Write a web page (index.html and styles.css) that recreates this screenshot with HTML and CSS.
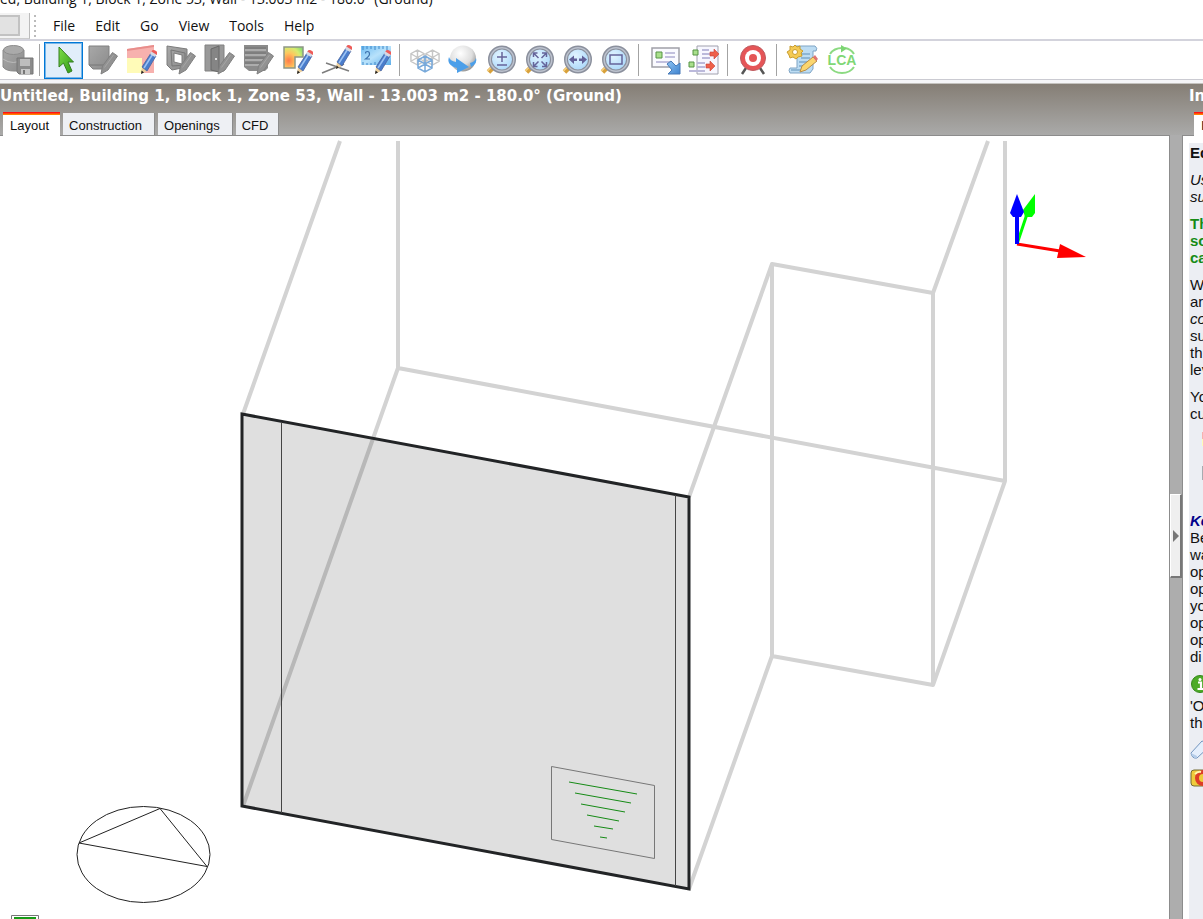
FILE: index.html
```html
<!DOCTYPE html>
<html lang="en">
<head>
<meta charset="utf-8">
<title>Untitled, Building 1, Block 1, Zone 53, Wall</title>
<link rel="stylesheet" href="styles.css">
</head>
<body>
<svg class="defs" aria-hidden="true">
  <defs>
    <linearGradient id="gGrey" x1="0" y1="0" x2="1" y2="1"><stop offset="0" stop-color="#a8a8a8"/><stop offset="1" stop-color="#8b8b8b"/></linearGradient>
    <linearGradient id="gGreen" x1="0" y1="0" x2="1" y2="1"><stop offset="0" stop-color="#7ede4a"/><stop offset="1" stop-color="#2f9a14"/></linearGradient>
    <radialGradient id="gHeat" cx=".25" cy=".65" r=".9"><stop offset="0" stop-color="#ff7a4a"/><stop offset=".4" stop-color="#ffc65e"/><stop offset=".7" stop-color="#d8ec70"/><stop offset="1" stop-color="#86dc70"/></radialGradient>
    <radialGradient id="gLens" cx=".4" cy=".35" r=".7"><stop offset="0" stop-color="#e2f4ff"/><stop offset="1" stop-color="#a5d5fa"/></radialGradient>
    <radialGradient id="gBall" cx=".4" cy=".3" r=".75"><stop offset="0" stop-color="#ffffff"/><stop offset=".6" stop-color="#dedede"/><stop offset="1" stop-color="#8c8c8c"/></radialGradient>
    <linearGradient id="gBlue" x1="0" y1="0" x2="1" y2="1"><stop offset="0" stop-color="#8fc4f3"/><stop offset="1" stop-color="#3f83cf"/></linearGradient>
    <linearGradient id="gRuler" x1="0" y1="0" x2="1" y2="1"><stop offset="0" stop-color="#6fbcf2"/><stop offset=".5" stop-color="#b8e2fb"/><stop offset="1" stop-color="#5eaeea"/></linearGradient>
    <symbol id="pencil" viewBox="0 0 30 30">
      <path d="M14 29l1-7 5 4z" fill="#eccf9c"/><path d="M14 29l.6-3.500 2.400 2z" fill="#222"/>
      <path d="M15 22L24 8l5 3-9 15z" fill="#4a7dcc" stroke="#4a64a0" stroke-width=".8"/>
      <path d="M17 23L25.500 9.500" stroke="#9cc3f4" stroke-width="1.500"/>
      <path d="M23 9l1.500-3 5.500 3-2 3z" fill="#d5d9e4"/><path d="M24.300 6.500Q26 4 29 6t1 4z" fill="#ee5b58"/>
    </symbol>
    <symbol id="pencilGrey" viewBox="0 0 30 30"><path d="M13 29l1.500-8L24.500 7.500 29.500 11 20 25z" fill="#929292" stroke="#808080"/><path d="M16.500 22.500L25.500 10" stroke="#a6a6a6"/></symbol>
    <symbol id="lens" viewBox="0 0 30 30">
      <path d="M2.500 27l5-5" stroke="#d8a13b" stroke-width="5"/><path d="M1.500 26l5-5" stroke="#f5d180" stroke-width="1.500"/>
      <circle cx="16" cy="14.500" r="12" fill="url(#gLens)" stroke="#8b909d" stroke-width="4"/>
      <circle cx="16" cy="14.500" r="11.800" fill="none" stroke="#bcc2ce" stroke-width="1.500"/>
    </symbol>
    <symbol id="cube" viewBox="0 0 16 18"><path d="M8 1l7 4v8l-7 4-7-4V5zM1 5l7 4 7-4M8 9v8M8 1v8M1 13l7-4 7 4" fill="none" stroke="currentColor" stroke-width="1.500"/></symbol>
  </defs>
</svg>

<div class="window-title">ed, Building 1, Block 1, Zone 53, Wall - 13.003 m2 - 180.0° (Ground)</div>

<nav class="menubar">
  <div class="menu-stub"><span></span></div>
  <i class="grip"></i>
  <button>File</button><button>Edit</button><button>Go</button><button>View</button><button>Tools</button><button>Help</button>
</nav>

<div class="toolbar">
  <button class="tool save" aria-label="Save"><svg viewBox="0 0 30 30"><path d="M0 5v17q3 4 11 4h10V5z" fill="url(#gGrey)" stroke="#888"/><ellipse cx="10.500" cy="5" rx="10" ry="4.500" fill="#aaa" stroke="#8d8d8d"/><path d="M0 14q10 7 21 0" fill="none" stroke="#bbb"/><path d="M14 13h16v16H16l-2-2z" fill="#8b8b8b" stroke="#777"/><path d="M17 14h10v7H17z" fill="#bebebe"/><path d="M18 24h9v5h-9z" fill="#c9c9c9"/><path d="M20 25h2v4h-2z" fill="#777"/></svg></button>
  <i class="sep"></i>
  <div class="group wide">
    <button class="tool selected" aria-label="Select"><svg viewBox="0 0 30 30"><path d="M10 2v20l4.500-4 4.500 10 4-2-4-9h5.500z" fill="url(#gGreen)" stroke="#357e20"/></svg></button>
    <button class="tool" aria-label="Edit surface"><svg viewBox="0 0 30 30"><path d="M1 1h20v20l-3 3H5l-4-4z" fill="url(#gGrey)" stroke="#808080"/><path d="M1 20h17l3-3" fill="none" stroke="#777"/><use href="#pencilGrey"/></svg></button>
    <button class="tool" aria-label="Edit notes"><svg viewBox="0 0 30 30"><path d="M0 4l27-4v28H0z" fill="#f7b1ae"/><path d="M0 4l27-4v2L0 6z" fill="#e88d8b"/><path d="M0 13h15v15H0z" fill="#fffbb8"/><use href="#pencil"/></svg></button>
    <button class="tool" aria-label="Draw window"><svg viewBox="0 0 30 30"><path fill-rule="evenodd" d="M1 1l20 3v18L6 25l-5-5zM8 8v9l8 2v-9z" fill="url(#gGrey)" stroke="#7c7c7c"/><path d="M5 5l14 3v12L6 21z" fill="none" stroke="#777"/><use href="#pencilGrey"/></svg></button>
    <button class="tool" aria-label="Draw door"><svg viewBox="0 0 30 30"><path d="M0 0h19v26H0z" fill="#999" stroke="#818181"/><path d="M6 4l8-3v26l-8-2z" fill="#858585" stroke="#696969"/><path d="M10 14h2" stroke="#ddd" stroke-width="2"/><use href="#pencilGrey"/></svg></button>
    <button class="tool" aria-label="Draw vent"><svg viewBox="0 0 30 30"><path d="M0 0h24v23l-3 3H5l-5-4z" fill="#8b8b8b"/><path d="M1 5h21M1 10h21M1 15h20M1 20h18" stroke="#b8b8b8" stroke-width="1.500"/><path d="M1 3h21M1 8h21M1 13h20M1 18h18" stroke="#727272"/><use href="#pencilGrey"/></svg></button>
    <button class="tool" aria-label="Edit zone"><svg viewBox="0 0 30 30"><path d="M1 2h19v10h-8v11H1z" fill="url(#gHeat)" stroke="#8e9686" stroke-width="1.500"/><use href="#pencil"/></svg></button>
    <button class="tool" aria-label="Draw line"><svg viewBox="0 0 30 30"><path d="M0 28L22 19M4 18l23 8" stroke="#7d7d7d" stroke-width="1.500"/><g transform="translate(0 -5)"><use href="#pencil" width="30" height="30"/></g></svg></button>
    <button class="tool" aria-label="Measure"><svg viewBox="0 0 30 30"><path d="M0 1h30v19H0z" fill="url(#gRuler)"/><path d="M2 1v4M6 1v3M10 1v3M14 1v4M18 1v3M22 1v3M26 1v4M2 20v-3M6 20v-2M10 20v-2M14 20v-3" stroke="#3f87c8"/><path d="M4.500 8.500Q4.500 6.500 6.500 6.500T8.500 9Q8.500 11 4.500 14H9" fill="none" stroke="#3d72ad" stroke-width="1.200"/><use href="#pencil"/></svg></button>
  </div>
  <i class="sep"></i>
  <div class="group views">
    <button class="tool" aria-label="Axonometric view"><svg viewBox="0 0 30 30"><g color="#c6c6c6"><use href="#cube" x="0" y="4" width="15" height="17"/><use href="#cube" x="15" y="4" width="15" height="17"/></g><g color="#78a9da"><use href="#cube" x="7" y="10" width="16" height="18"/></g></svg></button>
    <button class="tool" aria-label="Orbit"><svg viewBox="0 0 30 30"><circle cx="15" cy="13.500" r="13" fill="url(#gBall)"/><path d="M1 12q1 4 7 5v-4l13 9-12 6v-5Q-2 20 1 12zM22 18q5-1 6-5 2 5-5 9z" fill="#4c9fe9"/></svg></button>
    <button class="tool" aria-label="Zoom"><svg viewBox="0 0 30 30"><use href="#lens"/><path d="M11 12h10M16 7v10M11 20h10" stroke="#65649a" stroke-width="1.500"/></svg></button>
    <button class="tool" aria-label="Fit view"><svg viewBox="0 0 30 30"><use href="#lens"/><path d="M9.500 12V8h4m-4 0l5 5M18 8h4.500v4m0-4l-5 5M9.500 17v4.500h4m-4 0l5-5M18 21.500h4.500V17m0 4.500l-5-5" fill="none" stroke="#65649a" stroke-width="1.500"/></svg></button>
    <button class="tool" aria-label="Pan"><svg viewBox="0 0 30 30"><use href="#lens"/><path d="M7 14.500l5-4v3h3v2.500h-3v3zM25 14.500l-5-4v3h-3v2.500h3v3z" fill="#626199"/></svg></button>
    <button class="tool" aria-label="Zoom window"><svg viewBox="0 0 30 30"><use href="#lens"/><path d="M10 10h12v9H10z" fill="none" stroke="#65649a" stroke-width="1.500"/></svg></button>
  </div>
  <i class="sep"></i>
  <div class="group transfer">
    <button class="tool" aria-label="Load data"><svg viewBox="0 0 30 30"><path d="M1 3h27v19H1z" fill="#fafaff" stroke="#a0a0a8" stroke-width="1.500"/><path d="M5 7h6v6H5z" fill="#a9df8c" stroke="#569447"/><path d="M14 8h10M14 12h10M5 17h16" stroke="#c2c0de" stroke-width="2"/><path d="M16 19l4-3 5 5 4-3v11H17l4-4z" fill="url(#gBlue)" stroke="#4679b7"/></svg></button>
    <button class="tool" aria-label="Copy data"><svg viewBox="0 0 30 30"><path d="M8 1h21v28H8z" fill="#f7f7ff" stroke="#a1a1ae"/><path d="M4 5h5v5H4zM0 17h5v5H0z" fill="#a9df8c" stroke="#569447"/><path d="M13 5h7M13 9h9M13 13h8M8 18h8M8 22h8M0 26h16" stroke="#bbb9db" stroke-width="2"/><path d="M21 7h4V4l5 5-5 5v-3h-4zM17 19h4v-3l5 5-5 5v-3h-4z" fill="#ee604a" stroke="#c64237" stroke-width=".6"/></svg></button>
  </div>
  <i class="sep"></i>
  <button class="tool target" aria-label="Target"><svg viewBox="0 0 30 30"><path d="M8 23l-4 6M22 23l4 6" stroke="#565656" stroke-width="2.500"/><circle cx="15" cy="13" r="12.500" fill="#e55557" stroke="#bd5b60"/><circle cx="15" cy="13" r="8" fill="#fff"/><circle cx="15" cy="13" r="4" fill="#e45656"/></svg></button>
  <i class="sep"></i>
  <div class="group wide scripts">
    <button class="tool" aria-label="Script"><svg viewBox="0 0 30 30"><path d="M7 1h20q3 2 1 5h-3v18l-3 4H2q-2-3 0-5h7V5q-3-2-2-4z" fill="#bcdcf3" stroke="#7fa4c5"/><path d="M13 9h9M13 13h9M11 17h9M11 21h8M3 25h14" stroke="#7da9cb" stroke-width="1.500"/><path d="M7 0l2 2 3-1v3l3 2-2 2 1 3-4 1-2 2-3-2-3 1-1-3-2-3 3-2V1l3 1z" fill="#f4ca54" stroke="#c99e31"/><circle cx="7" cy="7" r="2.500" fill="#fff" stroke="#c99e31"/><path d="M12 27l2-6 11-9 4 4-11 9z" fill="#fbd66f" stroke="#b88d47"/><path d="M25 12l2-2 3 4-2 2z" fill="#df7474"/></svg></button>
    <button class="tool" aria-label="Life cycle assessment"><svg viewBox="0 0 30 30"><path d="M3 9Q7 3 15 3M18 3q6 1 9 6M27 22q-4 6-12 6T3 22" fill="none" stroke="#8cda82" stroke-width="2"/><path d="M14 0l6 3.500-6 4z" fill="#7cd573"/><text x="15" y="20" text-anchor="middle" class="lca">LCA</text></svg></button>
  </div>
</div>

<div class="workspace">
  <main class="pane">
    <header class="head">
      <h1>Untitled, Building 1, Block 1, Zone 53, Wall - 13.003 m2 - 180.0° (Ground)</h1>
      <div class="tabs" role="tablist"><button role="tab" class="active">Layout</button><button role="tab">Construction</button><button role="tab">Openings</button><button role="tab">CFD</button></div>
    </header>
    <div class="canvas">
      <svg viewBox="0 136 1169 783" preserveAspectRatio="xMinYMin meet" role="img" aria-label="Wall layout">
        <g fill="none" stroke="#d3d3d3" stroke-width="4" stroke-linejoin="round">
          <path d="M340 141L243 414M398 141V368L1005 481V141M398 368L243 806M689 497L772 264L933 293L988 141M772 264V656L933 685V293M933 685L1005 481M772 656L689 889"/>
        </g>
        <path d="M242 414L689 497V889L242 806z" fill="#000" fill-opacity=".125" stroke="#222426" stroke-width="3"/>
        <path d="M281.500 422V813M675.500 495V886" stroke="#444" stroke-width="1"/>
        <path d="M551.500 766.500L654.500 785.500V858.500L551.500 839.500z" fill="none" stroke="#777"/>
        <path d="M569 782L637 794M575 793L631 803M581 804L625 812M587 815L619 821M594 826L613 829M600 837L607 838" stroke="#168b16" stroke-width="1"/>
        <g fill="none" stroke="#222" stroke-width="1"><ellipse cx="143.500" cy="854.500" rx="66.500" ry="48"/><path d="M160 808.500L79 843L207 866.500z"/></g>
        <path d="M11.500 922v-6.500h27v6.500" fill="#fff" stroke="#777"/><path d="M14 918h22" stroke="#169b16" stroke-width="2"/>
        <path d="M1017 244L1028 211" stroke="#0f0" stroke-width="3"/><path d="M1035 194l-12 16 2 7h7l3-4z" fill="#0f0"/>
        <path d="M1017 244L1060 251" stroke="red" stroke-width="3"/><path d="M1060 244L1086 257L1057 258z" fill="red"/>
        <path d="M1017 244V215" stroke="#00f" stroke-width="4"/><path d="M1017 194l7 18-3 5h-8l-3-4z" fill="#00f"/>
      </svg>
    </div>
  </main>
  <div class="splitter"><button aria-label="Collapse panel"><svg viewBox="0 0 6 12"><path d="M0 0l6 6-6 6z" fill="#777"/></svg></button></div>
  <aside class="info">
    <header class="head"><h2>In</h2><div class="tabs"><button class="active">I</button></div></header>
    <div class="info-body"><div class="help">
      <h3>Ed</h3>
      <p class="em">Us<br>su</p>
      <p class="tip">Th<br>so<br>ca</p>
      <p>W<br>ar<br><em>co</em><br>su<br>th<br>lev</p>
      <p>Yo<br>cu</p>
      <div class="swatches"><i class="note"></i><i class="block"></i></div>
      <p class="key">Ke</p>
      <p>Be<br>wa<br>op<br>op<br>yo<br>op<br>op<br>di</p>
      <svg class="mark" viewBox="0 0 18 18"><circle cx="10" cy="9" r="8.500" fill="#4cab28" stroke="#34871b"/><path d="M8 7.500h3V14M7.500 14h6" fill="none" stroke="#fff" stroke-width="2.200"/><circle cx="10" cy="4.500" r="1.500" fill="#fff"/></svg>
      <p class="after-mark">'O<br>th</p>
      <svg class="mark eraser" viewBox="0 0 18 18"><path d="M1 12L12 0l9 4L7 17q-5 1-6-5z" fill="#e5effc" stroke="#7395be"/><path d="M1 12l6 3v2q-5 0-6-5z" fill="#b5cde9"/></svg>
      <svg class="mark" viewBox="0 0 18 18"><rect x="1" y="1" width="20" height="16" rx="3" fill="#efcb3b" stroke="#756b32"/><circle cx="13" cy="9" r="6" fill="none" stroke="#dd3d28" stroke-width="4"/><path d="M5 5q3-3 6-2" fill="none" stroke="#fff6aa" stroke-width="2"/></svg>
    </div></div>
  </aside>
</div>
</body>
</html>
```
FILE: styles.css
```css
* { box-sizing: border-box; }
body { margin: 0; height: 100vh; display: flex; flex-direction: column; overflow: hidden; background: #f5f5f7; color: #111; font-family: "Liberation Sans", sans-serif; }
button { font: inherit; color: inherit; border: 0; background: none; padding: 0; }
h1, h2, h3, p { margin: 0; font-size: inherit; font-weight: inherit; }
.defs { position: absolute; width: 0; height: 0; }

.window-title { height: 13px; flex: none; overflow: hidden; background: #fff; font: 14px/16px "Open Sans", sans-serif; white-space: nowrap; display: flex; align-items: flex-end; padding-bottom: 6px; }

.menubar { flex: none; height: 26px; display: flex; align-items: center; background: #fff; font: 14px/26px "Open Sans", sans-serif; }
.menu-stub { width: 30px; height: 26px; background: #f3f3f3; border-right: 1px solid #bbb; border-bottom: 1px solid #ccc; padding: 2px 0; }
.menu-stub span { display: block; width: 20px; height: 21px; background: #e2e2e2; border: 2px solid #c2c2c2; border-left: 0; }
.grip { width: 2px; height: 22px; margin: 0 7px 0 4px; background: repeating-linear-gradient(#bbb 0 2px, transparent 2px 5px); }
.menubar button { padding: 0 10px; }

.toolbar { flex: none; height: 41px; display: flex; align-items: center; background: #fff; border-top: 2px solid #d3d3dc; border-bottom: 1px solid #cbcbd2; }
.group { display: flex; }
.tool { width: 38px; height: 37px; display: grid; place-items: center; }
.tool svg { width: 30px; height: 30px; display: block; overflow: visible; }
.save { width: 35px; }
.wide .tool { width: 39px; }
.selected { background: #e1eefa; border: 1px solid #0078d7; outline: 1px solid #78b6e8; outline-offset: -2px; }
.sep { width: 1px; height: 32px; background: #a3a3a3; margin: 0 4px; }
.views { margin-left: 2px; }
.transfer { margin-left: 4px; }
.target { margin-left: 2px; }
.scripts { margin-left: 2px; }
.lca { font: bold 14px "Liberation Sans", sans-serif; fill: #80d775; }

.workspace { flex: 1; min-height: 0; display: flex; margin-top: 3px; border-top: 1px solid #c4c2be; background: linear-gradient(#857e75, #aaaaa9 51px); }
.pane { flex: 1; min-width: 0; display: flex; flex-direction: column; }
.head { flex: none; height: 52px; display: flex; flex-direction: column; justify-content: space-between; background: linear-gradient(#857e75, #aaaaa9); border-bottom: 1px solid #8c8c8c; }
.head h1, .head h2 { color: #fff; font: bold 15px/25px "DejaVu Sans", sans-serif; white-space: nowrap; }
.tabs { display: flex; align-items: flex-end; gap: 3px; padding-left: 3px; font-size: 13px; line-height: 21px; }
.tabs button { height: 22px; padding: 2px 12px 0 6px; background: #eef0f4; border: 1px solid #8c8c8c; border-width: 0 1px 0 0; }
.tabs button:last-child { padding-right: 10px; }
.tabs .active, .tabs .active:last-child { height: 24px; padding: 0 11px 0 7px; background: #fff; border-right: 0; border-top: 3px solid #ff6a00; border-image: linear-gradient(#f11 0 1px, #ff8000 2px) 3 0 0 0; margin-bottom: -1px; }
.canvas { flex: 1; min-height: 0; overflow: hidden; background: #fff; }
.canvas svg { width: 100%; display: block; }

.splitter { width: 14px; display: flex; flex-direction: column; background: #adadad; border: 1px solid #8c8c8c; border-width: 0 1px; margin-top: 51px; }
.splitter button { height: 84px; margin-top: 359px; display: flex; align-items: center; justify-content: flex-end; padding-right: 1px; background: #efefef; border: 1px solid #fff; border-right: 2px solid #777; border-bottom: 2px solid #777; }
.splitter svg { width: 6px; height: 12px; }
.info { width: 20px; display: flex; flex-direction: column; overflow: hidden; }
.info h2 { padding-left: 6px; }
.info .tabs { padding-left: 11px; }
.info-body { flex: 1; min-height: 0; background: #fff; padding: 7px 0 0 6px; }
.help { height: 100%; background: #eceef3; padding: 1px 0 0 1px; font-size: 15px; line-height: 17px; white-space: nowrap; overflow: hidden; display: flex; flex-direction: column; gap: 10px; }
.help h3, .key { font-weight: bold; }
.em { font-style: italic; }
.tip { color: #168b16; font-weight: bold; }
.key { color: #00008b; font-style: italic; margin-bottom: -10px; }
.swatches { height: 70px; display: flex; flex-direction: column; gap: 20px; padding: 0 0 0 12px; }
.swatches i { width: 20px; height: 14px; }
.note { background: linear-gradient(#f7b1ae 50%, #fffbb8 50%); }
.block { background: #a8abb0; }
.mark { flex: none; width: 18px; height: 18px; overflow: visible; }
.after-mark { margin-top: -6px; }
```
